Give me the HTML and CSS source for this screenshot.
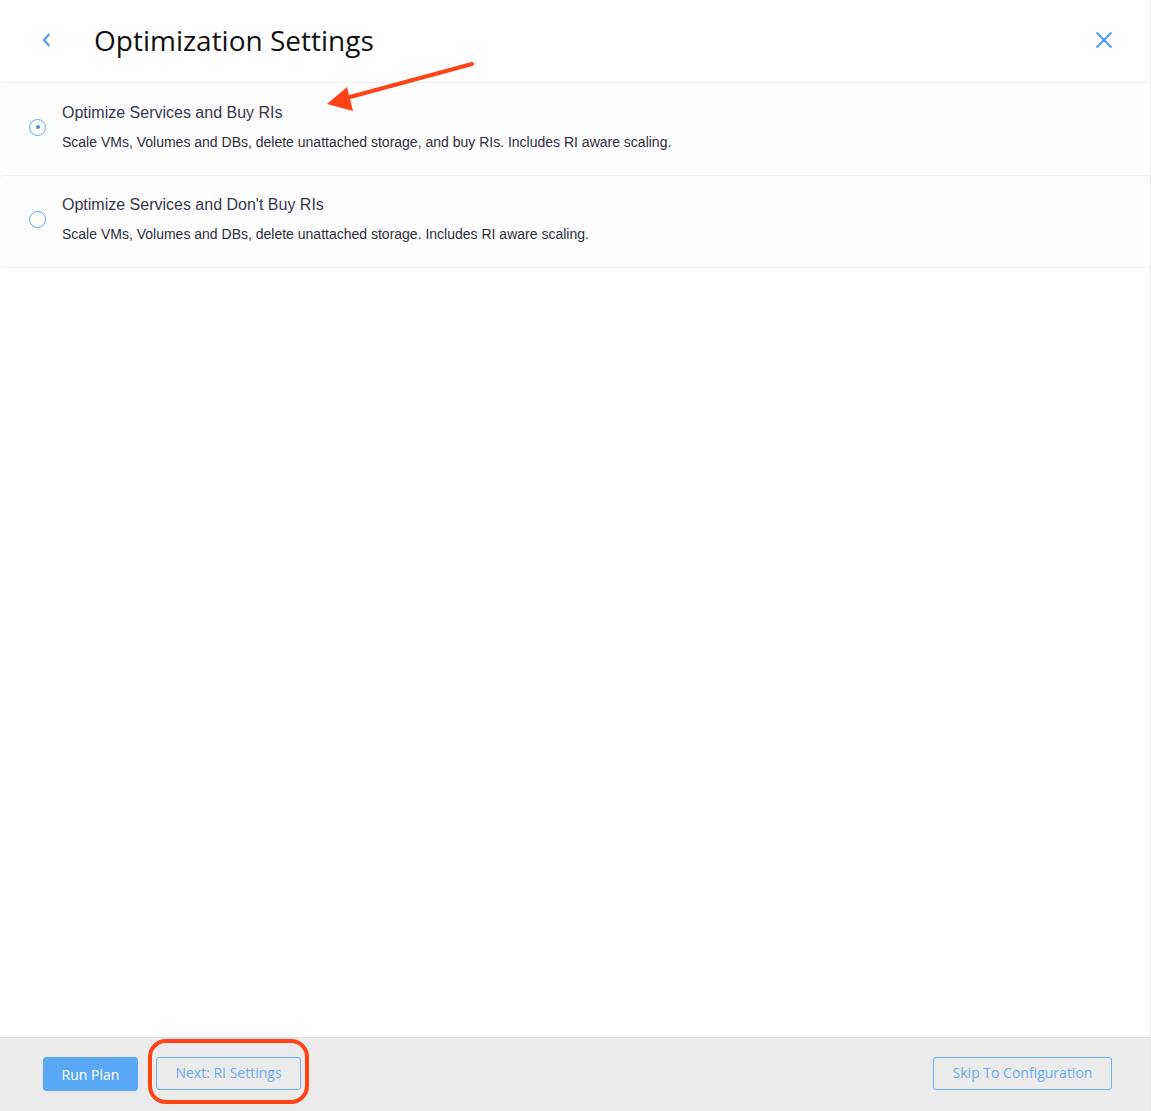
FILE: index.html
```
<!DOCTYPE html>
<html>
<head>
<meta charset="utf-8">
<link rel="stylesheet" href="styles.css">
</head>
<body>
<div class="page">
  <header class="header">
    <button class="icon-btn back" aria-label="Back">
      <svg width="12" height="16" viewBox="0 0 12 16"><path d="M8 2.5 L3 8 L8 13.5" fill="none" stroke="#4a9cf5" stroke-width="2" stroke-linecap="round" stroke-linejoin="round"/></svg>
    </button>
    <h1 class="title">Optimization Settings</h1>
    <button class="icon-btn close" aria-label="Close">
      <svg width="18" height="18" viewBox="0 0 18 18"><path d="M1.5 1.5 L16.5 16.5 M16.5 1.5 L1.5 16.5" fill="none" stroke="#4a9cf5" stroke-width="2"/></svg>
    </button>
  </header>
  <main class="options">
    <label class="option">
      <span class="radio checked"><span class="dot"></span></span>
      <span class="option-text">
        <span class="option-title">Optimize Services and Buy RIs</span>
        <span class="option-desc">Scale VMs, Volumes and DBs, delete unattached storage, and buy RIs. Includes RI aware scaling.</span>
      </span>
    </label>
    <label class="option">
      <span class="radio"></span>
      <span class="option-text">
        <span class="option-title">Optimize Services and Don't Buy RIs</span>
        <span class="option-desc">Scale VMs, Volumes and DBs, delete unattached storage. Includes RI aware scaling.</span>
      </span>
    </label>
  </main>
  <footer class="footer">
    <div class="footer-left">
      <button class="btn primary">Run Plan</button>
      <button class="btn outline">Next: RI Settings</button>
    </div>
    <button class="btn outline skip">Skip To Configuration</button>
  </footer>
  <svg class="annotations" width="1151" height="1111" viewBox="0 0 1151 1111">
    <line x1="472" y1="64" x2="350" y2="97" stroke="#ff4317" stroke-width="4" stroke-linecap="round"/>
    <polygon points="327,104 347,87 353,111" fill="#ff4317"/>
    <rect x="150" y="1041" width="157" height="61" rx="16" ry="16" fill="none" stroke="#ff4317" stroke-width="4"/>
  </svg>
</div>
</body>
</html>
```
FILE: styles.css
```
* { box-sizing: border-box; }
html, body { margin: 0; padding: 0; }
body {
  width: 1151px;
  height: 1111px;
  overflow: hidden;
  background: #fff;
  font-family: "Liberation Sans", Arial, sans-serif;
}
.page {
  position: relative;
  width: 1151px;
  height: 1111px;
  display: flex;
  flex-direction: column;
  border-right: 1px solid #e6e6e9;
}
.header {
  height: 82px;
  display: flex;
  align-items: center;
  padding: 0 36px 0 37px;
  flex: none;
}
.icon-btn {
  border: 0;
  background: none;
  padding: 0;
  display: flex;
  align-items: center;
  justify-content: center;
  cursor: pointer;
}
.back { width: 20px; height: 20px; margin-right: 37px; margin-top: -2px; }
.close { width: 20px; height: 20px; margin-left: auto; margin-top: -2px; }
.title {
  margin: 0;
  font-family: "Open Sans", sans-serif;
  font-weight: 400;
  font-size: 28px;
  color: #111;
  margin-top: -2px;
}
.options {
  flex: 1;
  display: flex;
  flex-direction: column;
}
.option {
  display: flex;
  align-items: center;
  height: 93px;
  border-top: 1px solid #eeeef3;
  border-radius: 3px;
  background: #fefefe;
  padding-left: 29px;
  cursor: pointer;
}
.option:last-child { border-bottom: 1px solid #eeeef3; }
.radio {
  width: 17px;
  height: 17px;
  border: 1.3px solid #5aa7f5;
  border-radius: 50%;
  display: flex;
  align-items: center;
  justify-content: center;
  flex: none;
  margin-right: 16px;
  margin-bottom: 4px;
}
.dot {
  width: 4px;
  height: 4px;
  border-radius: 50%;
  background: #3f8fe8;
}
.option-text {
  display: flex;
  flex-direction: column;
  gap: 10px;
  padding-bottom: 5px;
}
.option-title {
  font-size: 16px;
  line-height: 20px;
  color: #36364c;
}
.option-desc {
  font-size: 14px;
  line-height: 18px;
  color: #2d2d3a;
}
.footer {
  flex: none;
  height: 74px;
  background: #ebebeb;
  border-top: 1px solid #dedede;
  display: flex;
  align-items: flex-start;
  justify-content: space-between;
  padding: 19px 38px 0 43px;
}
.footer-left { display: flex; gap: 18px; }
.btn {
  height: 34px;
  border-radius: 3px;
  font-family: "Open Sans", sans-serif;
  font-size: 14px;
  padding: 0;
  white-space: nowrap;
  cursor: pointer;
}
.primary {
  width: 95px;
  background: #5aa9f9;
  border: 1px solid #5aa9f9;
  color: #fff;
}
.outline {
  background: transparent;
  border: 1px solid #6cb0f6;
  color: #6cabf2;
  width: 145px;
  height: 33px;
  padding-bottom: 3px;
}
.skip { width: 179px; }
.annotations {
  position: absolute;
  left: 0;
  top: 0;
  pointer-events: none;
}
```
